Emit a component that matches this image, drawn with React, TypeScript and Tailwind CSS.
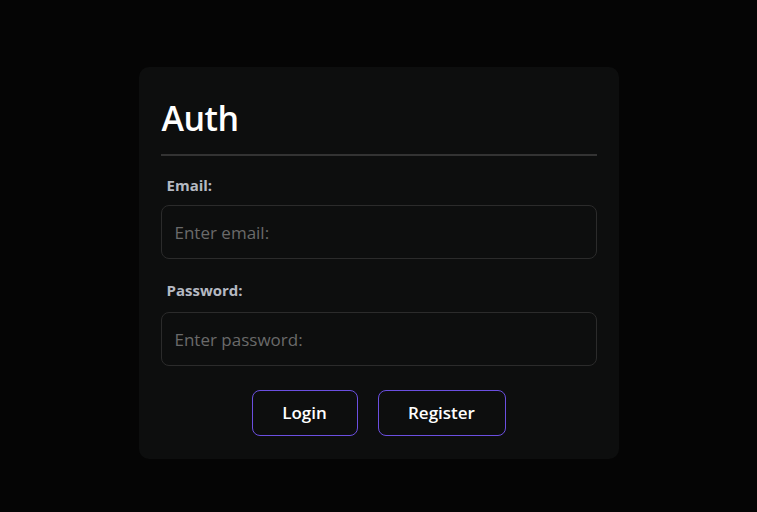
export default function App() {
  return (
    <div
      className="w-[757px] h-[512px] bg-[#050505] flex justify-center pt-[67px]"
      style={{ fontFamily: '"Open Sans", "Noto Sans", sans-serif' }}
    >
      <div className="w-[480px] h-[392px] bg-[#0d0e0e] rounded-[10px] px-[22px] pt-[26px] flex flex-col">
        <h1 className="text-[34px] leading-[50px] font-semibold text-white tracking-[-0.5px] ml-[1px]">Auth</h1>
        <div className="h-[2px] bg-[#333333] mt-[11px]" />
        <label className="text-[15px] font-bold text-[#b5b9c2] ml-[6px] mt-[19px] leading-[20px]">Email:</label>
        <input
          className="mt-[10px] h-[54px] w-full rounded-[8px] border border-[#2b2b2b] bg-[#0d0e0e] px-[13px] text-[17px] text-white placeholder:text-[#6a6a6a] outline-none"
          placeholder="Enter email:"
        />
        <label className="text-[15px] font-bold text-[#b5b9c2] ml-[6px] mt-[21px] leading-[20px]">Password:</label>
        <input
          type="password"
          className="mt-[12px] h-[54px] w-full rounded-[8px] border border-[#2b2b2b] bg-[#0d0e0e] px-[13px] text-[17px] text-white placeholder:text-[#6a6a6a] outline-none"
          placeholder="Enter password:"
        />
        <div className="flex justify-center gap-[20px] mt-[24px]">
          <button className="w-[106px] h-[46px] rounded-[8px] border border-[#6b4fe0] text-white text-[17px] font-semibold">
            Login
          </button>
          <button className="w-[128px] h-[46px] rounded-[8px] border border-[#6b4fe0] text-white text-[17px] font-semibold">
            Register
          </button>
        </div>
      </div>
    </div>
  );
}
